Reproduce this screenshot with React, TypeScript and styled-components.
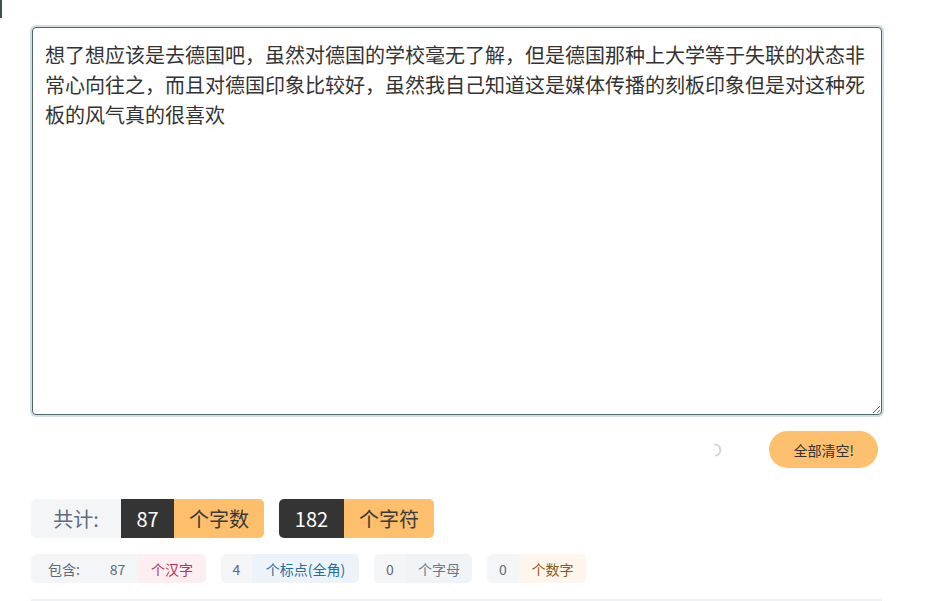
import React, { useState } from "react";
import styled, { createGlobalStyle } from "styled-components";

const initialText =
  "想了想应该是去德国吧，虽然对德国的学校毫无了解，但是德国那种上大学等于失联的状态非常心向往之，而且对德国印象比较好，虽然我自己知道这是媒体传播的刻板印象但是对这种死板的风气真的很喜欢";

const GlobalStyle = createGlobalStyle`
  body {
    margin: 0;
    background: #fff;
    font-family: "Noto Sans CJK SC", "Noto Sans", sans-serif;
    color: #333;
  }
`;

const EdgeMark = styled.div`
  width: 2px;
  height: 18px;
  background: #3f5058;
`;

const Wrapper = styled.div`
  width: 852px;
  margin: 9px 0 0 31px;
  display: flex;
  flex-direction: column;
`;

const TextArea = styled.textarea`
  box-sizing: border-box;
  width: 850px;
  height: 388px;
  margin-left: 1px;
  padding: 12px 12px;
  border: 1.5px solid #4f686f;
  border-radius: 4px;
  box-shadow: 0 0 0 2px #d4dde0;
  font-family: "Noto Sans CJK SC", sans-serif;
  font-size: 20px;
  line-height: 30px;
  color: #333;
  outline: none;
  resize: vertical;
`;

const ActionRow = styled.div`
  display: flex;
  justify-content: flex-end;
  align-items: center;
  gap: 46px;
  margin-top: 16px;
  padding-right: 5px;
`;

const ClearButton = styled.button`
  height: 37px;
  padding: 0 24px;
  border: none;
  border-radius: 19px;
  background: #fcc06e;
  color: #333;
  font-family: "Noto Sans CJK SC", sans-serif;
  font-size: 14px;
  cursor: pointer;
`;

const TotalRow = styled.div`
  display: flex;
  align-items: center;
  gap: 15px;
  margin-top: 31px;
`;

const Group = styled.div`
  display: flex;
  border-radius: 5px;
  overflow: hidden;
`;

const BigCell = styled.span<{ $bg: string; $fg: string; $w: number }>`
  display: flex;
  align-items: center;
  justify-content: center;
  height: 39px;
  width: ${(p) => p.$w}px;
  background: ${(p) => p.$bg};
  color: ${(p) => p.$fg};
  font-size: 20px;
`;

const DetailRow = styled.div`
  display: flex;
  align-items: center;
  gap: 15px;
  margin-top: 16px;
`;

const SmallCell = styled.span<{ $bg: string; $fg: string; $w: number }>`
  display: flex;
  align-items: center;
  justify-content: center;
  height: 29px;
  width: ${(p) => p.$w}px;
  background: ${(p) => p.$bg};
  color: ${(p) => p.$fg};
  font-size: 14px;
`;

const Divider = styled.div`
  height: 2px;
  width: 851px;
  margin-top: 16px;
  background: #f0f1f2;
`;

const grey = "#f4f5f7";

const Spinner = () => (
  <svg width="16" height="16" viewBox="0 0 16 16">
    <path
      d="M8 2.5 A5.5 5.5 0 0 1 8.9 13.4"
      fill="none"
      stroke="#d3d3d3"
      strokeWidth="2"
      strokeLinecap="round"
    />
  </svg>
);

export default function App() {
  const [text, setText] = useState(initialText);
  const han = (text.match(/[\u4e00-\u9fa5]/g) || []).length;
  const punct = (text.match(/[，。！？；：、“”‘’（）《》]/g) || []).length;
  const letters = (text.match(/[a-zA-Z]/g) || []).length;
  const digits = (text.match(/[0-9]/g) || []).length;
  const words = han + letters + digits;
  const bytes = han * 2 + punct * 2 + (text.length - han - punct);

  return (
    <>
      <GlobalStyle />
      <EdgeMark />
      <Wrapper>
        <TextArea value={text} onChange={(e) => setText(e.target.value)} />
        <ActionRow>
          <Spinner />
          <ClearButton onClick={() => setText("")}>全部清空!</ClearButton>
        </ActionRow>
        <TotalRow>
          <Group>
            <BigCell $bg={grey} $fg="#5d6b80" $w={90}>
              共计:
            </BigCell>
            <BigCell $bg="#343434" $fg="#fff" $w={53}>
              {words}
            </BigCell>
            <BigCell $bg="#fdbf6c" $fg="#3a3a3a" $w={90}>
              个字数
            </BigCell>
          </Group>
          <Group>
            <BigCell $bg="#343434" $fg="#fff" $w={65}>
              {bytes}
            </BigCell>
            <BigCell $bg="#fdbf6c" $fg="#3a3a3a" $w={90}>
              个字符
            </BigCell>
          </Group>
        </TotalRow>
        <DetailRow>
          <Group>
            <SmallCell $bg={grey} $fg="#5e6a7c" $w={66}>
              包含:
            </SmallCell>
            <SmallCell $bg={grey} $fg="#5e6a7c" $w={41}>
              {han}
            </SmallCell>
            <SmallCell $bg="#fdeef2" $fg="#c0304f" $w={68}>
              个汉字
            </SmallCell>
          </Group>
          <Group>
            <SmallCell $bg={grey} $fg="#5e6a7c" $w={31}>
              {punct}
            </SmallCell>
            <SmallCell $bg="#ecf4fa" $fg="#2a6c9e" $w={107}>
              个标点(全角)
            </SmallCell>
          </Group>
          <Group>
            <SmallCell $bg={grey} $fg="#5e6a7c" $w={32}>
              {letters}
            </SmallCell>
            <SmallCell $bg="#f0f4f6" $fg="#67798a" $w={66}>
              个字母
            </SmallCell>
          </Group>
          <Group>
            <SmallCell $bg={grey} $fg="#5e6a7c" $w={32}>
              {digits}
            </SmallCell>
            <SmallCell $bg="#fef6ec" $fg="#8a5a14" $w={67}>
              个数字
            </SmallCell>
          </Group>
        </DetailRow>
        <Divider />
      </Wrapper>
    </>
  );
}
